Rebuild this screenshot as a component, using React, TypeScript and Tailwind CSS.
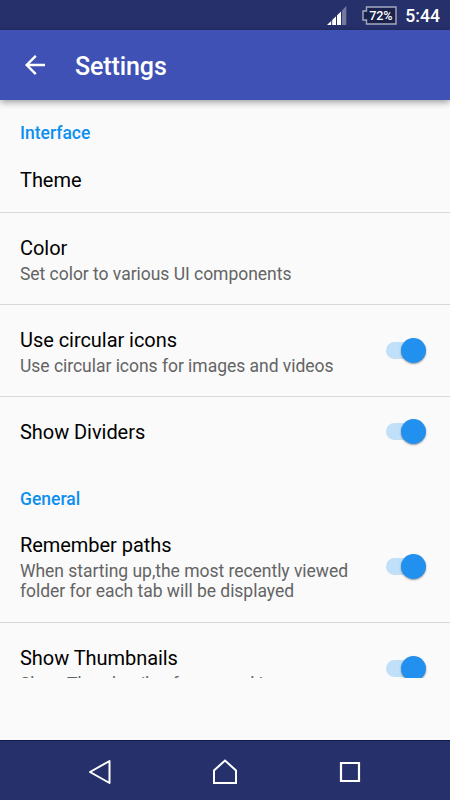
import React from 'react';

function Switch() {
  return (
    <div className="relative mb-[1px] h-[25px] w-[40px] shrink-0">
      <div className="mt-[4px] h-[17px] w-[34px] rounded-full bg-[#c0dff8]" />
      <div className="absolute left-[14.5px] top-0 size-[25px] rounded-full bg-[#2190ee] shadow-[0_1px_2px_rgba(0,0,0,0.4)]" />
    </div>
  );
}

function Row({ title, summary, on, className }: { title: string; summary?: string; on?: boolean; className: string }) {
  return (
    <div className={'flex shrink-0 items-center justify-between pl-5 pr-6 ' + className}>
      <div className="min-w-0">
        <div className="whitespace-nowrap text-[20px] leading-[26px] tracking-[-0.05px] text-black">{title}</div>
        {summary && <div className="mt-[3px] whitespace-pre text-[17.5px] leading-5 tracking-[-0.03px] text-[#646464]">{summary}</div>}
      </div>
      {on && <Switch />}
    </div>
  );
}

function Category({ children, className }: { children: string; className: string }) {
  return <div className={'shrink-0 px-5 text-[17.5px] font-medium leading-5 text-[#0d8ff0] ' + className}>{children}</div>;
}

export default function App() {
  return (
    <div className="flex h-[800px] w-[450px] flex-col overflow-hidden bg-[#fafafa] font-[Roboto,sans-serif]">
      <div className="flex h-[30px] shrink-0 items-center justify-end bg-[#26306b] pr-[10px] text-white">
        <svg className="mr-[15px] mt-[1px] h-[19px] w-[20px]" viewBox="0 0 20 19">
          <path d="M0 19L15 4.5V19Z" fill="#fff" />
          <path d="M15 4.5L19.3 0V19H15Z" fill="#747a9f" />
          <path d="M4.7 13V19M9.5 8V19M14.5 4V19" stroke="#26306b" strokeWidth="1" />
        </svg>
        <div className="relative mr-[8px] h-[19px] w-[35px]">
          <svg className="absolute inset-0" width="35" height="19" viewBox="0 0 35 19">
            <path d="M4.5 1H34V18H4.5V14H1V5H4.5Z" fill="#1a214d" stroke="#a5a9c0" strokeWidth="1.4" />
          </svg>
          <span className="absolute left-[7px] top-0 text-[12.6px] font-medium leading-[19px] tracking-[-0.2px]">72%</span>
        </div>
        <span className="pt-[1px] text-[17.6px] font-medium leading-[28px]">5:44</span>
      </div>
      <header className="relative z-10 flex h-[70px] shrink-0 items-center bg-[#3f51b5] pl-[25px] text-white shadow-[0_2px_7px_rgba(0,0,0,0.4)]">
        <svg className="h-5 w-5" viewBox="0 0 20 20" fill="none" stroke="#fff" strokeWidth="2.4">
          <path d="M10.8 .9L1.7 10L10.8 19.1M1.7 10H20" />
        </svg>
        <h1 className="ml-[30px] pt-[4px] text-[25px] font-medium leading-8 tracking-[-0.1px]">Settings</h1>
      </header>
      <main className="flex h-[578px] shrink-0 flex-col overflow-hidden">
        <Category className="mt-[23px]">Interface</Category>
        <Row className="h-[70px] border-b border-[#d8d8d8] pt-[4px]" title="Theme" />
        <Row className="h-[92px] border-b border-[#d8d8d8] pt-[1px]" title="Color" summary="Set color to various UI components" />
        <Row className="h-[92px] border-b border-[#d8d8d8] pt-[1px]" title="Use circular icons" summary="Use circular icons for images and videos" on />
        <Row className="h-[70px]" title="Show Dividers" on />
        <Category className="mt-[22px]">General</Category>
        <Row className="h-[114px] border-b border-[#d8d8d8] pt-[2px]" title="Remember paths" summary={'When starting up,the most recently viewed\nfolder for each tab will be displayed'} on />
        <Row className="h-[92px]" title="Show Thumbnails" summary="Show Thumbnails of apps and images" on />
      </main>
      <div className="flex-1" />
      <nav className="flex h-[60px] shrink-0 items-center justify-between border-t border-[#101850] bg-[#26306b] px-[87px] pt-[2px] text-white">
        <svg width="26" height="26" viewBox="-1 0 26 26" fill="none" stroke="#fff" strokeWidth="2" strokeLinejoin="round">
          <path d="M2 13L21.5 2V24Z" />
        </svg>
        <svg width="26" height="26" viewBox="0 0 26 26" fill="none" stroke="#fff" strokeWidth="2">
          <path d="M2 24V11.5L13 1.5L24 11.5V24Z" />
        </svg>
        <svg width="26" height="26" viewBox="-2 -2 26 26" fill="none" stroke="#fff" strokeWidth="2.2">
          <path d="M2 2H20V20H2Z" />
        </svg>
      </nav>
    </div>
  );
}
